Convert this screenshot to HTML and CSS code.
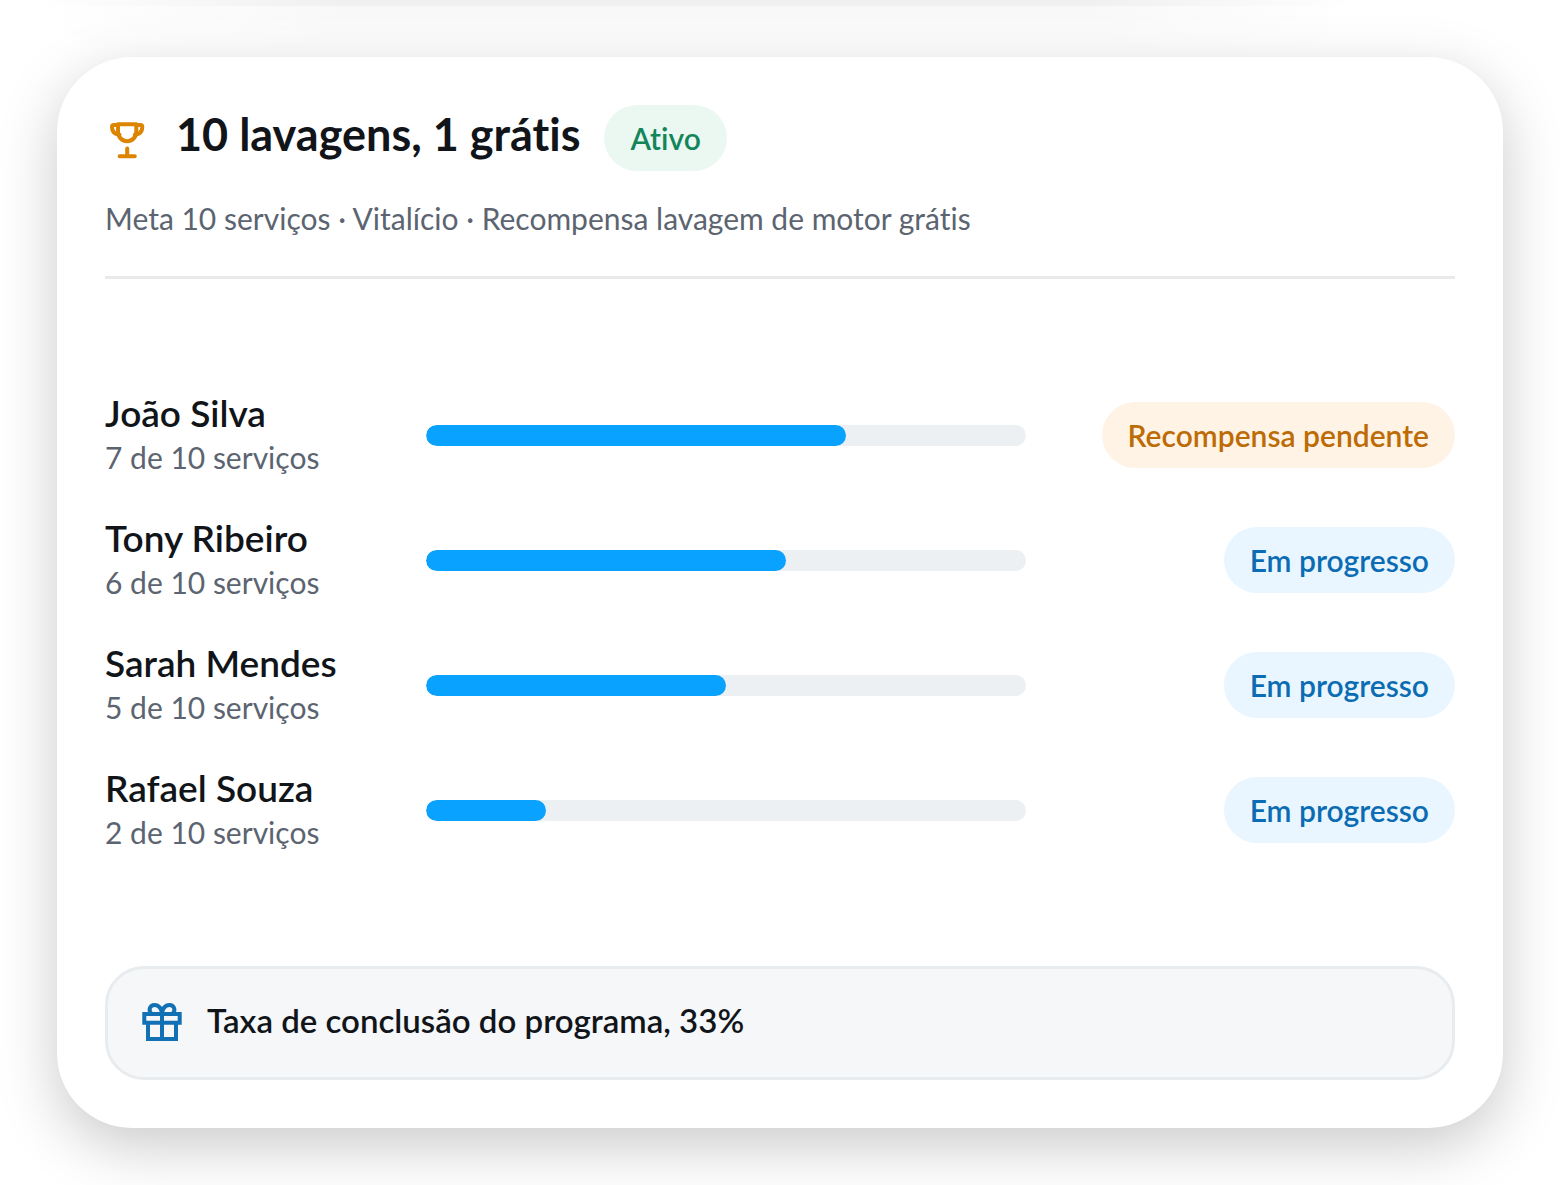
FILE: index.html
```
<!DOCTYPE html>
<html lang="pt-BR">
<head>
    <meta charset="UTF-8">
    <meta name="viewport" content="width=device-width, initial-scale=1.0">
    <title>Programa de fidelidade</title>
    <link rel="stylesheet" href="styles.css">
</head>
<body>
    <div class="previous-shadow"></div>

    <main class="card">
        <header class="card-header">
            <div class="title-row">
                <svg class="icon trophy" viewBox="0 0 45 45" aria-hidden="true">
                    <path d="M13 8.2h18.3v7.8a9.15 9.15 0 0 1-18.3 0z"/>
                    <path d="M13 9H9Q7 9 7 11c0 4.500 2 7.200 7.500 7.700"/>
                    <path d="M31.300 9h4q2 0 2 2c0 4.500-2 7.200-7.500 7.700"/>
                    <path d="M22.200 32.500v7.700M14.600 40.300h15.200"/>
                </svg>
                <h1>10 lavagens, 1 grátis</h1>
                <span class="badge badge-active">Ativo</span>
            </div>
            <p class="summary">Meta 10 serviços · Vitalício · Recompensa lavagem de motor grátis</p>
        </header>

        <ul class="customers">
            <li class="customer">
                <div>
                    <h2 id="joao">João Silva</h2>
                    <p>7 de 10 serviços</p>
                </div>
                <progress value="7" max="10" aria-labelledby="joao"></progress>
                <span class="badge badge-pending">Recompensa pendente</span>
            </li>
            <li class="customer">
                <div>
                    <h2 id="tony">Tony Ribeiro</h2>
                    <p>6 de 10 serviços</p>
                </div>
                <progress value="6" max="10" aria-labelledby="tony"></progress>
                <span class="badge badge-progress">Em progresso</span>
            </li>
            <li class="customer">
                <div>
                    <h2 id="sarah">Sarah Mendes</h2>
                    <p>5 de 10 serviços</p>
                </div>
                <progress value="5" max="10" aria-labelledby="sarah"></progress>
                <span class="badge badge-progress">Em progresso</span>
            </li>
            <li class="customer">
                <div>
                    <h2 id="rafael">Rafael Souza</h2>
                    <p>2 de 10 serviços</p>
                </div>
                <progress value="2" max="10" aria-labelledby="rafael"></progress>
                <span class="badge badge-progress">Em progresso</span>
            </li>
        </ul>

        <footer class="completion">
            <svg class="icon gift" viewBox="0 0 45 45" aria-hidden="true">
                <path d="M4.300 15h35.400v8.700H4.300zM8 23.700V40h28V23.700M22 15v25"/>
                <path d="M11.500 15C7.500 10.500 10.500 6 14.500 6c4.500 0 7.500 4 7.500 9 0-5 3-9 7.500-9 4 0 7 4.500 3 9"/>
            </svg>
            <p>Taxa de conclusão do programa, 33%</p>
        </footer>
    </main>
</body>
</html>
```
FILE: styles.css
```
* {
    box-sizing: border-box;
}

body {
    font-family: Lato, "Liberation Sans", sans-serif;
    font-variant-ligatures: none;
    background-color: #fff;
    color: #11151a;
    margin: 0;
    overflow-x: hidden;
}

h1, h2, p, ul {
    margin: 0;
    padding: 0;
}

/* Bottom edge of the shadow cast by the card above */
.previous-shadow {
    height: 57px;
    background: linear-gradient(to right, #fff 2%, #f0f0f0 22%, #f0f0f0 70%, #fff 87%);
    mask-image: linear-gradient(#000 6px, rgba(0, 0, 0, 0.5) 6px, rgba(0, 0, 0, 0.05));
}

.card {
    margin: 0 57px 57px;
    padding: 48px;
    background-color: #fff;
    border-radius: 75px;
    box-shadow: 0 18px 60px rgba(0, 0, 0, 0.21);
}

.card-header {
    border-bottom: 3px solid #e8eaec;
    padding-bottom: 40px;
}

.title-row {
    display: flex;
    align-items: center;
}

.icon {
    flex: none;
    width: 45px;
    height: 45px;
    fill: none;
}

.trophy {
    stroke: #dc8500;
    stroke-width: 4;
    stroke-linecap: round;
    stroke-linejoin: round;
}

h1 {
    font-size: 45px;
    line-height: 58px;
    font-weight: 700;
    margin: 0 24px 8px 26px;
}

.badge {
    font-size: 30px;
    line-height: 36px;
    font-weight: 600;
    padding: 15px 26px;
    border-radius: 33px;
    white-space: nowrap;
}

.badge-active {
    background-color: #ebf8f2;
    color: #13855a;
}

.badge-pending {
    background-color: #fff3e6;
    color: #bd6b05;
}

.badge-progress {
    background-color: #e9f6ff;
    color: #0b6cb3;
}

.summary {
    font-size: 30px;
    line-height: 36px;
    color: #5b6470;
    margin-top: 29px;
}

.customers {
    list-style: none;
    display: flex;
    flex-direction: column;
    gap: 37px;
    padding: 112px 0;
}

.customer {
    display: grid;
    grid-template-columns: 281px 1fr 389px;
    column-gap: 40px;
    align-items: center;
}

.customer h2 {
    font-size: 37px;
    line-height: 44px;
    font-weight: 600;
}

.customer p {
    font-size: 30px;
    line-height: 44px;
    color: #5b6470;
}

.customer .badge {
    justify-self: end;
}

progress {
    appearance: none;
    display: block;
    width: 100%;
    height: 21px;
    border: none;
    border-radius: 11px;
    overflow: hidden;
    background-color: #edf0f2;
}

progress::-webkit-progress-bar {
    background-color: #edf0f2;
}

progress::-webkit-progress-value {
    background-color: #0aa2ff;
    border-radius: 11px;
}

.completion {
    display: flex;
    align-items: flex-start;
    gap: 22px;
    padding: 30px 32px 33px;
    border: 3px solid #e8ecef;
    border-radius: 39px;
    background-color: #f5f7f9;
}

.completion p {
    font-size: 33px;
    line-height: 42px;
    font-weight: 600;
}

.gift {
    stroke: #1271b5;
    stroke-width: 4;
}
```
